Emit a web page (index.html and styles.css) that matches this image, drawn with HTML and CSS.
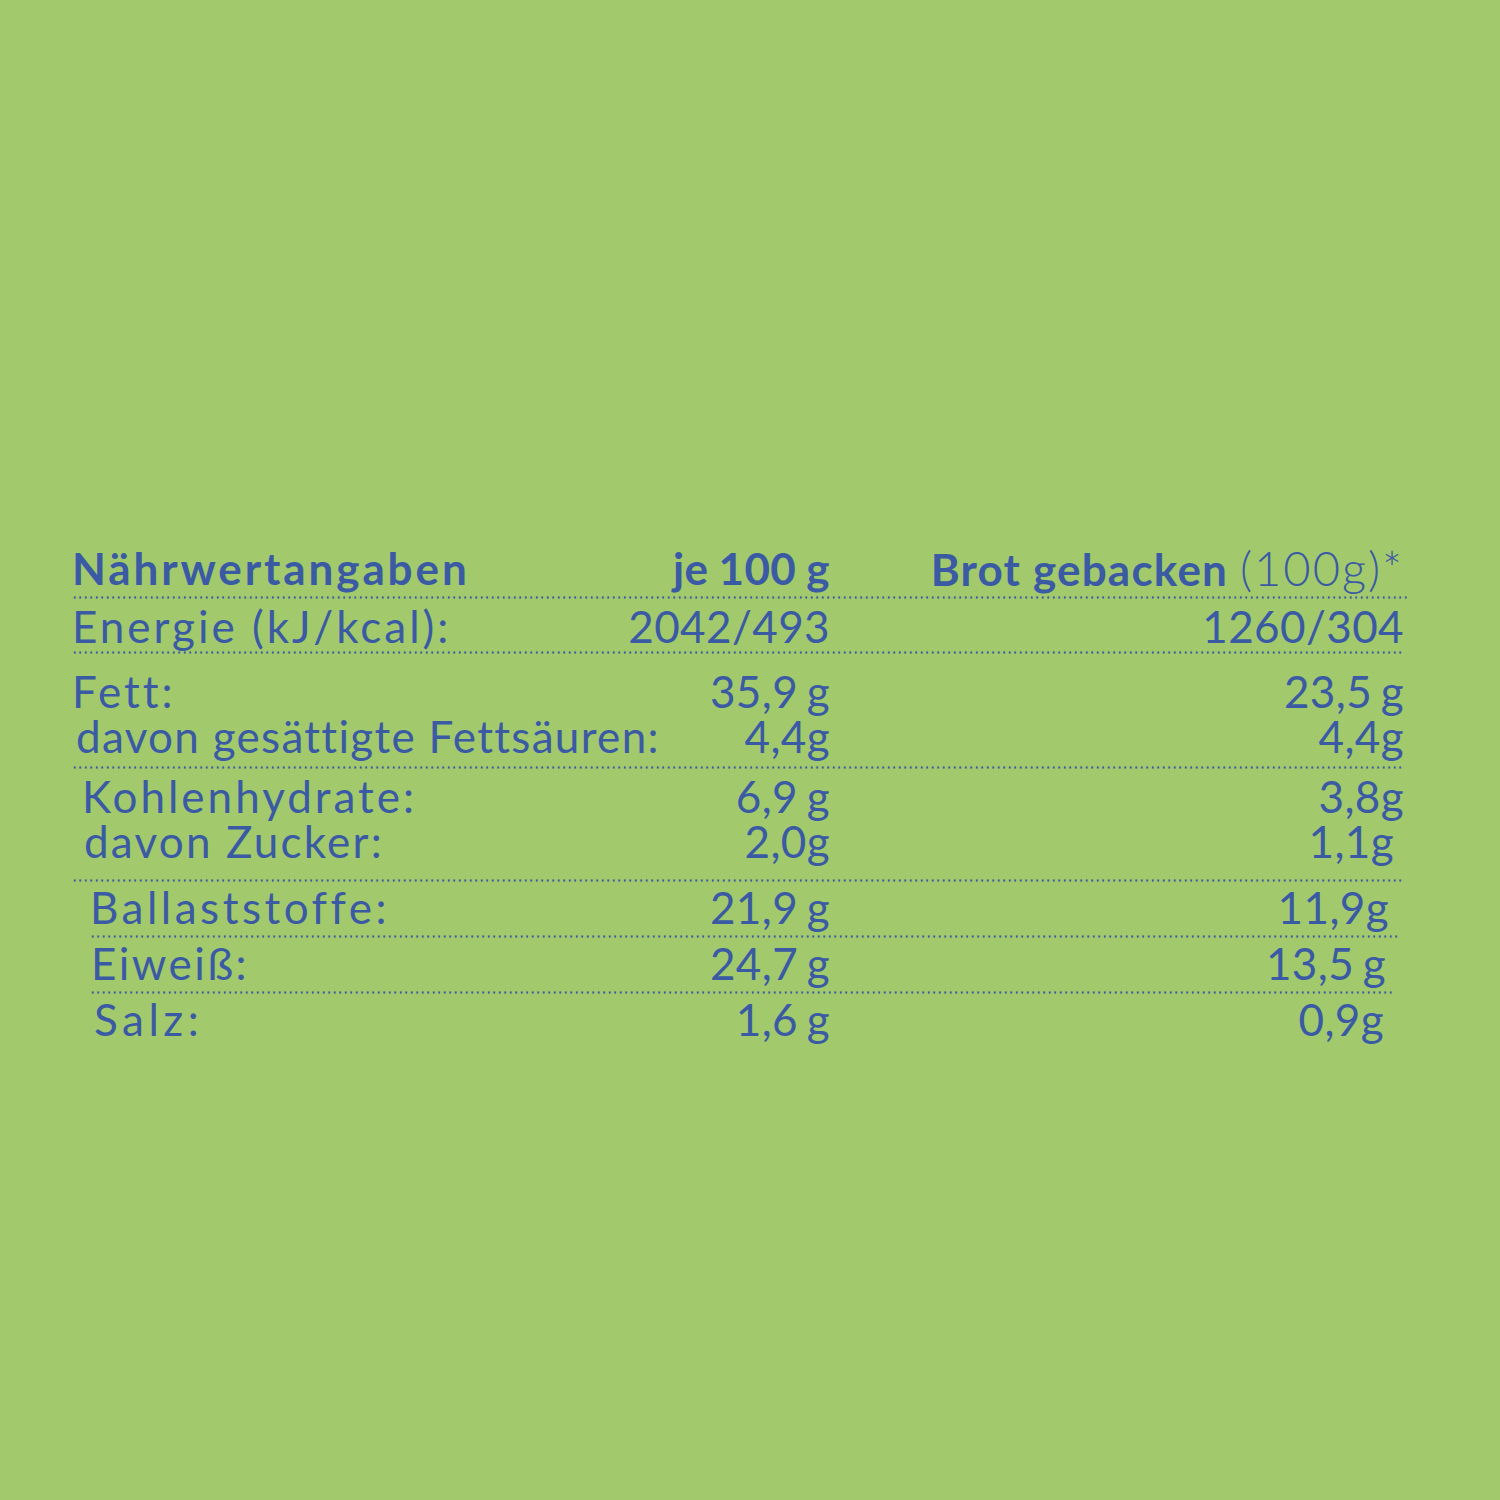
FILE: index.html
```html
<!DOCTYPE html>
<html lang="de">
<head>
<meta charset="utf-8">
<title>Nährwertangaben</title>
<link rel="stylesheet" href="styles.css">
</head>
<body>
<div class="panel">
  <div class="table">
    <div class="row head">
      <span class="label">Nährwertangaben</span>
      <span class="v1">je 100 g</span>
      <span class="v2">Brot gebacken <span class="light">(100g)*</span></span>
    </div>
    <div class="rule r1"></div>
    <div class="row energy">
      <span class="label">Energie (kJ/kcal):</span>
      <span class="v1">2042/493</span>
      <span class="v2">1260/304</span>
    </div>
    <div class="rule r2"></div>
    <div class="row fat">
      <span class="label">Fett:</span>
      <span class="v1">35,9 g</span>
      <span class="v2">23,5 g</span>
    </div>
    <div class="row sat sub">
      <span class="label">davon gesättigte Fettsäuren:</span>
      <span class="v1">4,4g</span>
      <span class="v2">4,4g</span>
    </div>
    <div class="rule r3"></div>
    <div class="row carb">
      <span class="label">Kohlenhydrate:</span>
      <span class="v1">6,9 g</span>
      <span class="v2">3,8g</span>
    </div>
    <div class="row sugar sub">
      <span class="label">davon Zucker:</span>
      <span class="v1">2,0g</span>
      <span class="v2">1,1g</span>
    </div>
    <div class="rule r4"></div>
    <div class="row fiber">
      <span class="label">Ballaststoffe:</span>
      <span class="v1">21,9 g</span>
      <span class="v2">11,9g</span>
    </div>
    <div class="rule r5"></div>
    <div class="row protein">
      <span class="label">Eiweiß:</span>
      <span class="v1">24,7 g</span>
      <span class="v2">13,5 g</span>
    </div>
    <div class="rule r6"></div>
    <div class="row salt">
      <span class="label">Salz:</span>
      <span class="v1">1,6 g</span>
      <span class="v2">0,9g</span>
    </div>
  </div>
</div>
</body>
</html>
```

FILE: styles.css
```css
html, body {
  margin: 0;
  padding: 0;
}
body {
  background: #a2c96c;
  width: 1500px;
  height: 1500px;
  font-family: Lato, "Noto Sans", sans-serif;
  color: #3b5aa4;
}
.panel {
  padding-top: 549px;
  padding-left: 72px;
}
.table {
  width: 1332px;
}
.row {
  --c2: 574px;
  display: grid;
  grid-template-columns: auto 1fr var(--c2);
  font-size: 44px;
  line-height: 38px;
  height: 38px;
  white-space: nowrap;
}
.label {
  letter-spacing: 3px;
}
.sub .label {
  letter-spacing: 1.3px;
}
.sugar .label {
  letter-spacing: 2.2px;
}
.v1, .v2 {
  text-align: right;
  letter-spacing: 0.4px;
  word-spacing: -3px;
}
.head {
  font-weight: 700;
}
.head .label { letter-spacing: 2.9px; }
.head .v1 { word-spacing: -1px; }
.head .v2 { letter-spacing: 1.2px; word-spacing: 0; }
.head .light {
  font-weight: 300;
  font-size: 47px;
  letter-spacing: 2px;
}
.rule {
  height: 3px;
  background-image: radial-gradient(circle, #3b5aa4 0.9px, rgba(59, 90, 164, 0) 1.4px);
  background-size: 5.5px 3px;
  background-repeat: repeat-x;
}
.r1 { margin-top: 9px; margin-right: -6px; }
.energy { margin-top: 8px; }
.r2 { margin-top: 6px; }
.fat { margin-top: 18px; }
.sat { margin-top: 7px; padding-left: 4px; }
.r3 { margin-top: 11px; }
.carb { margin-top: 8px; padding-left: 10px; }
.sugar { margin-top: 7px; padding-left: 12px; margin-right: 10px; --c2: 564px; }
.r4 { margin-top: 19px; }
.fiber { margin-top: 6px; padding-left: 18px; margin-right: 15px; --c2: 559px; }
.fiber .label { letter-spacing: 3.5px; }
.r5 { margin-top: 9px; margin-left: 18px; margin-right: 4px; }
.protein { margin-top: 6px; padding-left: 19px; margin-right: 18px; --c2: 556px; }
.protein .label { letter-spacing: 2.5px; }
.r6 { margin-top: 9px; margin-left: 18px; margin-right: 9px; }
.salt { margin-top: 6px; padding-left: 22px; margin-right: 20px; --c2: 554px; }
.salt .label { letter-spacing: 4.5px; }
```
